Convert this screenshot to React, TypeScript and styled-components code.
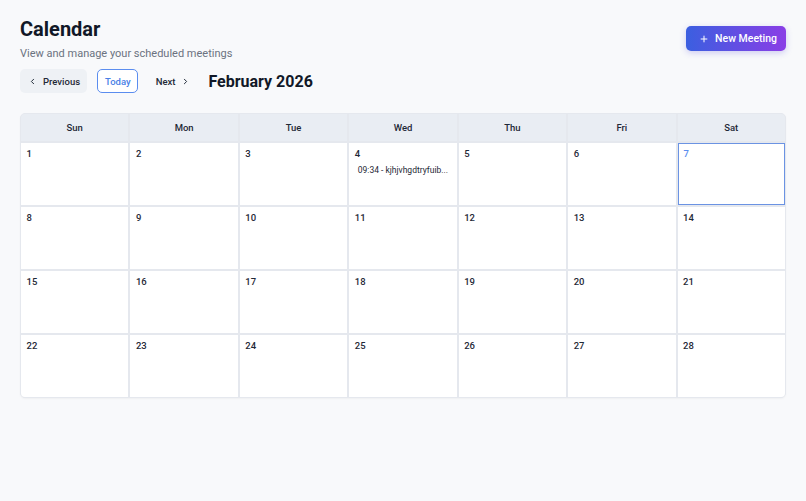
import styled, { createGlobalStyle } from "styled-components";

const GlobalStyle = createGlobalStyle`
  body {
    margin: 0;
    background: #f8f9fb;
    font-family: Roboto, "Noto Sans", sans-serif;
    color: #111827;
  }
`;

const Page = styled.div`
  padding: 16px 20px 20px 20px;
`;

const Header = styled.div`
  display: flex;
  justify-content: space-between;
  align-items: flex-start;
`;

const Title = styled.h1`
  margin: 0;
  font-size: 20px;
  font-weight: 700;
  line-height: 26px;
`;

const Subtitle = styled.p`
  margin: 5px 0 0 0;
  font-size: 11px;
  color: #6b7280;
`;

const NewButton = styled.button`
  display: flex;
  align-items: center;
  gap: 6px;
  margin-top: 10px;
  height: 25px;
  padding: 0 9px 0 13px;
  border: none;
  border-radius: 5px;
  background: linear-gradient(90deg, #3b5fe0, #8a3ee6);
  color: #fff;
  font-family: inherit;
  font-size: 10.5px;
  font-weight: 500;
  box-shadow: 0 2px 6px rgba(80, 70, 220, 0.25);
`;

const NavRow = styled.div`
  display: flex;
  align-items: center;
  margin-top: 9px;
`;

const NavButton = styled.button<{ $outlined?: boolean; $filled?: boolean }>`
  display: flex;
  align-items: center;
  gap: 6px;
  height: 24px;
  padding: 0 6px 0 7px;
  border: ${(p) => (p.$outlined ? "1.5px solid #5b8def" : "1.5px solid transparent")};
  border-radius: 5px;
  background: ${(p) => (p.$filled ? "#eef1f5" : p.$outlined ? "#fff" : "transparent")};
  color: ${(p) => (p.$outlined ? "#4a7fe6" : "#1f2937")};
  font-family: inherit;
  font-size: 9.5px;
  font-weight: 500;
  margin-right: 10px;
`;

const MonthLabel = styled.h2`
  margin: 0 0 0 1px;
  font-size: 16px;
  font-weight: 700;
`;

const Grid = styled.div`
  margin-top: 20px;
  display: grid;
  grid-template-columns: repeat(7, 1fr);
  gap: 2px;
  background: #e5e8ee;
  border: 1px solid #e5e8ee;
  border-radius: 5px;
  overflow: hidden;
  box-shadow: 0 1px 2px rgba(0, 0, 0, 0.04);
`;

const HeadCell = styled.div`
  height: 27px;
  display: flex;
  align-items: center;
  justify-content: center;
  background: #e9edf3;
  font-size: 9.5px;
  font-weight: 500;
  color: #1f2937;
`;

const DayCell = styled.div<{ $today?: boolean }>`
  height: 62px;
  box-sizing: border-box;
  background: #fff;
  padding: ${(p) => (p.$today ? "3.5px 5px" : "5px 5.5px")};
  border: ${(p) => (p.$today ? "1.5px solid #6b93e3" : "none")};
  min-width: 0;
`;

const DayNum = styled.div<{ $today?: boolean }>`
  font-size: 9.5px;
  font-weight: 500;
  color: ${(p) => (p.$today ? "#5b8def" : "#1f2937")};
`;

const Event = styled.div`
  margin-top: 4px;
  padding: 2px 3px;
  font-size: 8.5px;
  color: #1f2937;
  white-space: nowrap;
  overflow: hidden;
  text-overflow: ellipsis;
  border-radius: 3px;
`;

const Chevron = ({ dir }: { dir: "left" | "right" }) => (
  <svg width="9" height="9" viewBox="0 0 24 24" fill="none" stroke="currentColor" strokeWidth="2.6" strokeLinecap="round" strokeLinejoin="round">
    {dir === "left" ? <path d="M15 18l-6-6 6-6" /> : <path d="M9 18l6-6-6-6" />}
  </svg>
);

const days = ["Sun", "Mon", "Tue", "Wed", "Thu", "Fri", "Sat"];

const events: Record<number, string> = {
  4: "09:34 - kjhjvhgdtryfuib...",
};

function App() {
  const dates = [];
  for (let i = 1; i <= 28; i++) dates.push(i);

  return (
    <>
      <GlobalStyle />
      <Page>
        <Header>
          <div>
            <Title>Calendar</Title>
            <Subtitle>View and manage your scheduled meetings</Subtitle>
          </div>
          <NewButton>
            <svg width="10" height="10" viewBox="0 0 24 24" fill="none" stroke="currentColor" strokeWidth="2.4" strokeLinecap="round">
              <path d="M12 5v14M5 12h14" />
            </svg>
            New Meeting
          </NewButton>
        </Header>
        <NavRow>
          <NavButton $filled>
            <Chevron dir="left" />
            Previous
          </NavButton>
          <NavButton $outlined>Today</NavButton>
          <NavButton>
            Next
            <Chevron dir="right" />
          </NavButton>
          <MonthLabel>February 2026</MonthLabel>
        </NavRow>
        <Grid>
          {days.map((d) => (
            <HeadCell key={d}>{d}</HeadCell>
          ))}
          {dates.map((n) => (
            <DayCell key={n} $today={n === 7}>
              <DayNum $today={n === 7}>{n}</DayNum>
              {events[n] && <Event>{events[n]}</Event>}
            </DayCell>
          ))}
        </Grid>
      </Page>
    </>
  );
}

export default App;
